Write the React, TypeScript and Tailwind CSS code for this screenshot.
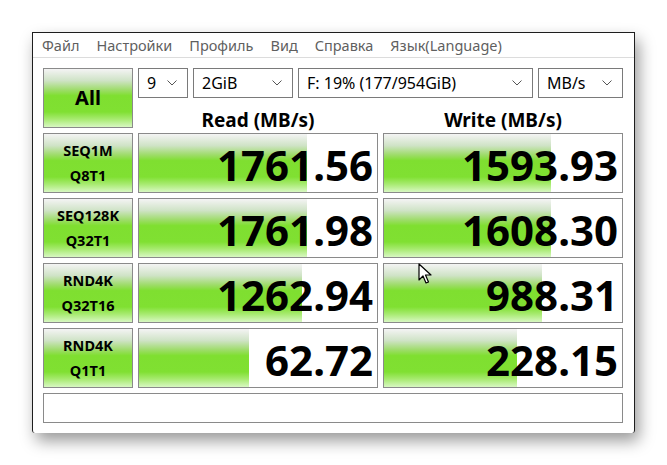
import React from "react";

const font = { fontFamily: '"Noto Sans", "Open Sans", sans-serif' };

function Chevron() {
  return (
    <svg width="10" height="6" viewBox="0 0 10 6" className="shrink-0">
      <path d="M0.5 0.5 L5 5 L9.5 0.5" fill="none" stroke="#555" strokeWidth="1" />
    </svg>
  );
}

function Select({ w, label }: { w: string; label: string }) {
  return (
    <div className={`${w} h-[30px] border border-[#7a7a7a] bg-white flex items-center justify-between pl-[8px] pr-[10px] text-[16px] text-black`}>
      <span>{label}</span>
      <Chevron />
    </div>
  );
}

const grad =
  "bg-[linear-gradient(to_bottom,#f4f4f4_0%,#cfe3c6_20%,#9edc6a_36%,#7fdf30_46%,#80e032_74%,#a6ea6e_86%,#d8f8c2_100%)]";

function TestBtn({ a, b }: { a: string; b: string }) {
  return (
    <div className={`w-[90px] h-[60px] border border-[#8a8a8a] ${grad} flex flex-col items-center justify-center text-[14.5px] font-bold leading-[25px] text-black`}>
      <span>{a}</span>
      <span>{b}</span>
    </div>
  );
}

function Cell({ v, bar }: { v: string; bar: number }) {
  return (
    <div className="relative w-[240px] h-[60px] border border-[#8a8a8a] bg-white overflow-hidden">
      <div className={`absolute left-0 top-0 bottom-0 ${grad}`} style={{ width: bar }} />
      <div className="relative h-full flex items-center justify-end pr-[4px] pt-[4px] text-[42px] font-bold text-black leading-none">
        {v}
      </div>
    </div>
  );
}

const rows = [
  { a: "SEQ1M", b: "Q8T1", r: "1761.56", rb: 168, w: "1593.93", wb: 167 },
  { a: "SEQ128K", b: "Q32T1", r: "1761.98", rb: 168, w: "1608.30", wb: 167 },
  { a: "RND4K", b: "Q32T16", r: "1262.94", rb: 163, w: "988.31", wb: 158 },
  { a: "RND4K", b: "Q1T1", r: "62.72", rb: 110, w: "228.15", wb: 133 },
];

export default function App() {
  return (
    <div className="relative w-[667px] h-[465px] bg-white pl-[32px] pt-[32px]" style={font}>
      <div className="w-[603px] h-[401px] bg-white border-t border-l border-r border-[#1e1e1e] rounded-b-[3px] shadow-[4px_8px_16px_rgba(0,0,0,0.4)] flex flex-col">
        <div className="h-[25px] border-b border-[#dcdcdc] flex items-center pl-[9px] pt-[1px] text-[14.5px] text-[#5f5f5f]">
          <span className="mr-[17px]">Файл</span>
          <span className="mr-[17px]">Настройки</span>
          <span className="mr-[17px]">Профиль</span>
          <span className="mr-[17px]">Вид</span>
          <span className="mr-[17px]">Справка</span>
          <span>Язык(Language)</span>
        </div>
        <div className="pl-[10px] pt-[10px] flex flex-col gap-[5px]">
          <div className="flex gap-[5px]">
            <div className={`w-[90px] h-[60px] border border-[#8a8a8a] ${grad} flex items-center justify-center text-[20px] font-bold text-black`}>
              All
            </div>
            <div className="flex flex-col">
              <div className="flex gap-[5px]">
                <Select w="w-[50px]" label="9" />
                <Select w="w-[100px]" label="2GiB" />
                <Select w="w-[235px]" label="F: 19% (177/954GiB)" />
                <Select w="w-[85px]" label="MB/s" />
              </div>
              <div className="flex gap-[5px] h-[30px] items-end text-[19px] font-bold text-black leading-[16px]">
                <div className="w-[240px] text-center">Read (MB/s)</div>
                <div className="w-[240px] text-center">Write (MB/s)</div>
              </div>
            </div>
          </div>
          {rows.map((r, i) => (
            <div key={i} className="flex gap-[5px]">
              <TestBtn a={r.a} b={r.b} />
              <Cell v={r.r} bar={r.rb} />
              <Cell v={r.w} bar={r.wb} />
            </div>
          ))}
          <div className="w-[580px] h-[30px] border border-[#8a8a8a] bg-white" />
        </div>
      </div>
      <svg className="absolute left-[418px] top-[263px]" width="14" height="22" viewBox="0 0 14 22">
        <path d="M1 1 L1 17 L5 13 L8 20 L10.5 19 L7.5 12 L13 12 Z" fill="#fff" stroke="#000" strokeWidth="1.2" strokeLinejoin="round" />
      </svg>
    </div>
  );
}
